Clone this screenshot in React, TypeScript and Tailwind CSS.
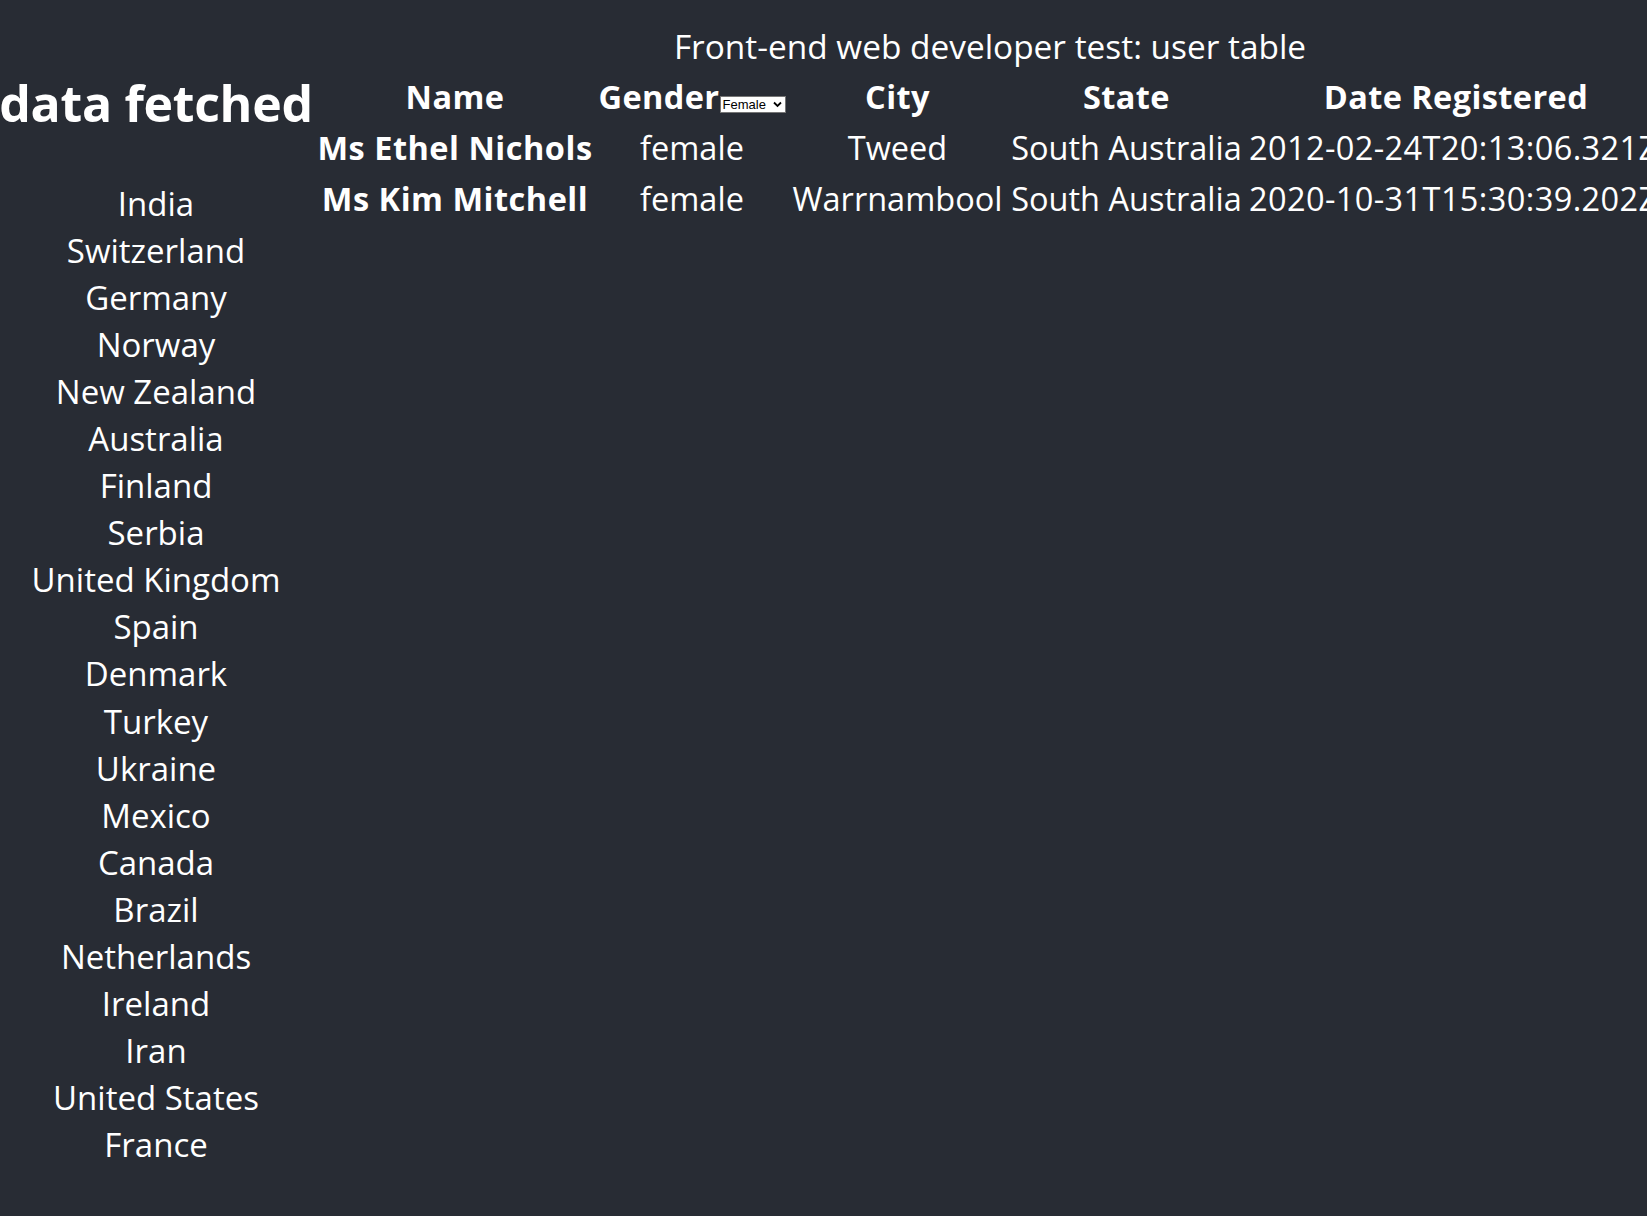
import React from "react";

const countries = [
  "India",
  "Switzerland",
  "Germany",
  "Norway",
  "New Zealand",
  "Australia",
  "Finland",
  "Serbia",
  "United Kingdom",
  "Spain",
  "Denmark",
  "Turkey",
  "Ukraine",
  "Mexico",
  "Canada",
  "Brazil",
  "Netherlands",
  "Ireland",
  "Iran",
  "United States",
  "France",
];

const users = [
  {
    name: "Ms Ethel Nichols",
    gender: "female",
    city: "Tweed",
    state: "South Australia",
    date: "2012-02-24T20:13:06.321Z",
  },
  {
    name: "Ms Kim Mitchell",
    gender: "female",
    city: "Warrnambool",
    state: "South Australia",
    date: "2020-10-31T15:30:39.202Z",
  },
];

export default function App() {
  return (
    <div
      className="min-h-screen w-full overflow-hidden bg-[#282c34] text-white"
      style={{ fontFamily: '"Open Sans", "Noto Sans", sans-serif' }}
    >
      <div className="flex w-[1700px] flex-row items-start">
        {/* Left column */}
        <div className="flex w-[312px] shrink-0 flex-col items-center">
          <h1 className="mt-[72px] whitespace-nowrap text-[50px] font-bold leading-[62px] tracking-[-0.3px]">
            data fetched
          </h1>
          <div className="mt-[46px] flex flex-col items-center text-[33px] leading-[47.05px]">
            {countries.map((c) => (
              <div key={c}>{c}</div>
            ))}
          </div>
        </div>

        {/* Right part */}
        <div className="flex w-[1356px] shrink-0 flex-col items-center">
          <div className="pt-[23px] text-[33.4px] leading-[47px]">
            Front-end web developer test: user table
          </div>
          <table className="border-separate border-spacing-[2px] text-[32.5px] leading-[47px]">
            <thead>
              <tr>
                <th className="w-[278px] p-[1px] text-center font-bold tracking-[0.4px]">Name</th>
                <th className="w-[192px] p-[1px] text-center font-bold tracking-[0.4px]">
                  <span className="inline-flex items-baseline">
                    <span>Gender</span>
                    <span className="relative inline-flex h-[17px] w-[66px] items-center border border-[#767676] bg-white pl-[2px] text-[13px] leading-[15px] tracking-normal text-black">
                      <span style={{ fontFamily: '"Liberation Sans", Arial, sans-serif' }} className="font-normal">
                        Female
                      </span>
                      <svg
                        className="absolute right-[3px] top-[4px]"
                        width="9"
                        height="7"
                        viewBox="0 0 9 7"
                      >
                        <path d="M1 1.5 L4.5 5 L8 1.5" stroke="black" strokeWidth="1.8" fill="none" />
                      </svg>
                    </span>
                  </span>
                </th>
                <th className="w-[215px] p-[1px] text-center font-bold tracking-[0.4px]">City</th>
                <th className="w-[239px] p-[1px] text-center font-bold tracking-[0.4px]">State</th>
                <th className="w-[416px] p-[1px] text-center font-bold tracking-[0.4px]">Date Registered</th>
              </tr>
            </thead>
            <tbody>
              {users.map((u) => (
                <tr key={u.name}>
                  <th className="whitespace-nowrap p-[1px] text-center font-bold tracking-[0.5px]">{u.name}</th>
                  <td className="whitespace-nowrap p-[1px] text-center">{u.gender}</td>
                  <td className="whitespace-nowrap p-[1px] text-center">{u.city}</td>
                  <td className="whitespace-nowrap p-[1px] text-center">{u.state}</td>
                  <td className="whitespace-nowrap p-[1px] text-left tracking-[0.4px]">{u.date}</td>
                </tr>
              ))}
            </tbody>
          </table>
        </div>
      </div>
    </div>
  );
}
